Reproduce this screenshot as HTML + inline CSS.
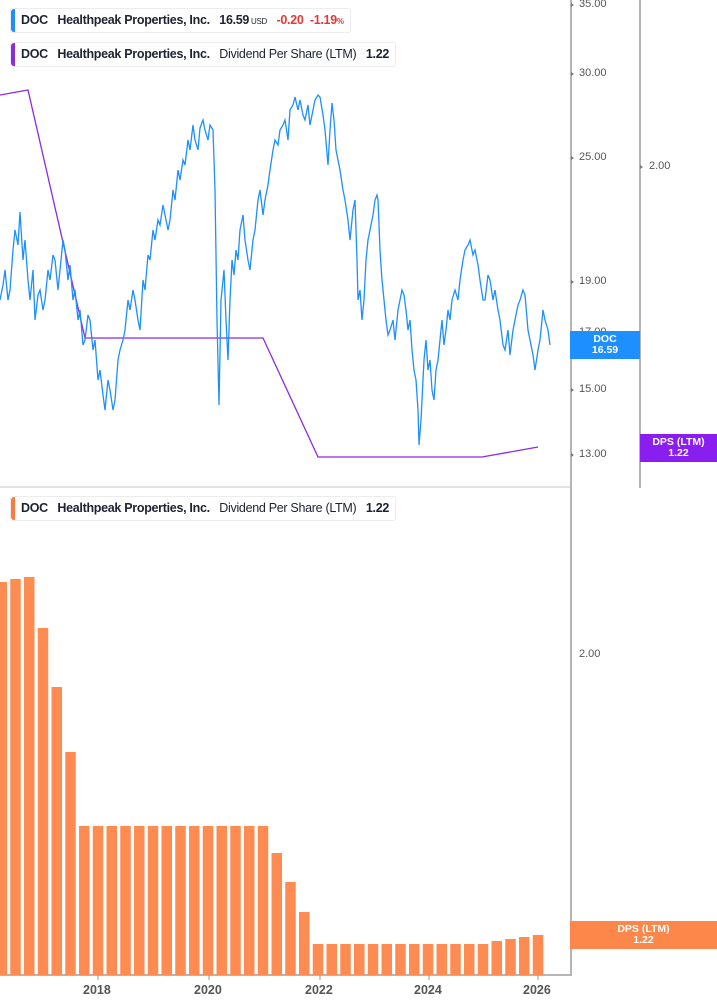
<!DOCTYPE html>
<html><head><meta charset="utf-8"><style>
body{margin:0;width:717px;height:1005px;background:#fff;overflow:hidden;position:relative;font-family:"Liberation Sans",sans-serif}
.leg{position:absolute;left:10px;height:23px;border:1px solid #ececec;border-radius:3px;background:#fff;font-size:12.5px;font-weight:bold;color:#1d2230;line-height:23px;padding:0 6px 0 10px;white-space:nowrap;letter-spacing:-0.3px}
.leg:before{content:"";position:absolute;left:0;top:0;bottom:0;width:4px;border-radius:3px 0 0 3px;background:var(--c)}
.n{font-weight:normal}
.ax{position:absolute;font-size:11px;color:#555}
.tag{position:absolute;color:#fff;font-weight:bold;font-size:10.5px;text-align:center;line-height:11px;padding-top:3px;box-sizing:border-box}
.yr{position:absolute;top:983px;font-size:12.5px;font-weight:bold;color:#555}
</style></head><body>
<svg width="717" height="1005" style="position:absolute;left:0;top:0">
<rect x="0" y="486" width="570" height="2" fill="#e4e4e4"/>
<line x1="571" y1="0" x2="571" y2="976" stroke="#b5b5b5" stroke-width="2"/>
<line x1="640" y1="0" x2="640" y2="488" stroke="#b5b5b5" stroke-width="2"/>
<line x1="0" y1="975" x2="571" y2="975" stroke="#b5b5b5" stroke-width="2"/>
<g fill="#777"><path d="M571 3l3 2-3 2z"/><path d="M571 72l3 2-3 2z"/><path d="M571 156l3 2-3 2z"/><path d="M571 280l3 2-3 2z"/><path d="M571 331l3 2-3 2z"/><path d="M571 388l3 2-3 2z"/><path d="M571 453l3 2-3 2z"/><path d="M640 165l3 2-3 2z"/></g>
<g stroke="#999" stroke-width="1"><line x1="98" y1="975" x2="98" y2="980"/><line x1="209" y1="975" x2="209" y2="980"/><line x1="320" y1="975" x2="320" y2="980"/><line x1="429" y1="975" x2="429" y2="980"/><line x1="538" y1="975" x2="538" y2="980"/></g>
<polyline fill="none" stroke="#8a2be2" stroke-width="1.3" points="0,95 28,90 85,338 263,338 318,457 482,457 538,447"/>
<polyline fill="none" stroke="#1e8fff" stroke-width="1.3" points="0,300 3,285 5,270 8,300 10,290 13,250 15,230 18,245 20,212 23,260 25,240 28,280 30,300 33,270 35,320 38,295 40,290 43,310 45,300 48,270 50,280 53,255 55,260 58,290 60,270 63,240 65,250 68,280 70,265 73,300 75,290 78,320 80,310 83,345 85,340 88,315 90,320 93,350 95,340 98,380 100,370 103,395 105,410 108,380 110,390 113,410 115,400 118,360 120,350 123,340 125,330 128,300 130,310 133,290 135,300 138,320 140,330 143,280 145,290 148,255 150,260 153,230 155,240 158,220 160,225 163,205 165,215 168,230 170,220 173,190 175,200 178,170 180,180 183,160 185,165 188,140 190,150 193,125 195,140 198,150 200,128 203,120 205,130 208,140 210,125 213,130 215,190 217,320 219,405 221,300 224,270 226,320 228,360 230,300 232,260 234,275 236,250 238,260 240,230 243,215 245,240 248,260 250,270 253,240 255,230 258,200 260,190 263,215 265,200 268,185 270,170 273,150 275,140 278,145 280,130 283,125 285,120 288,140 290,110 293,105 295,97 298,110 300,100 303,115 305,120 308,105 310,125 313,110 315,100 318,95 320,97 323,115 325,130 328,165 330,130 332,103 334,120 336,150 338,160 340,170 343,190 345,200 348,220 350,240 353,210 355,200 357,260 358,300 360,290 362,320 364,300 366,260 368,240 370,230 373,215 375,200 377,195 378,200 380,250 382,280 384,300 386,320 388,335 390,330 393,320 395,340 398,310 400,300 402,290 404,295 406,310 408,330 410,320 412,350 414,370 416,380 418,410 419,445 421,420 422,400 424,360 426,340 428,370 430,360 432,390 434,400 436,370 438,360 440,340 442,320 444,345 446,330 448,310 450,320 452,300 455,290 458,300 460,280 463,260 465,250 468,245 470,240 473,255 475,250 478,265 480,280 483,300 485,300 488,275 490,280 493,300 495,290 498,310 500,320 503,345 505,350 508,330 510,355 513,330 515,320 518,305 520,300 523,290 525,295 528,330 530,340 533,355 535,370 538,350 540,340 543,310 545,320 548,330 550,345"/>
<g fill="#fd8b52">
<rect x="-3.5" y="582" width="10.5" height="393"/>
<rect x="10.25" y="579" width="10.5" height="396"/>
<rect x="24" y="577" width="10.5" height="398"/>
<rect x="37.75" y="628" width="10.5" height="347"/>
<rect x="51.5" y="687" width="10.5" height="288"/>
<rect x="65.25" y="752" width="10.5" height="223"/>
<rect x="79" y="826" width="10.5" height="149"/>
<rect x="92.75" y="826" width="10.5" height="149"/>
<rect x="106.5" y="826" width="10.5" height="149"/>
<rect x="120.25" y="826" width="10.5" height="149"/>
<rect x="134" y="826" width="10.5" height="149"/>
<rect x="147.75" y="826" width="10.5" height="149"/>
<rect x="161.5" y="826" width="10.5" height="149"/>
<rect x="175.25" y="826" width="10.5" height="149"/>
<rect x="189" y="826" width="10.5" height="149"/>
<rect x="202.75" y="826" width="10.5" height="149"/>
<rect x="216.5" y="826" width="10.5" height="149"/>
<rect x="230.25" y="826" width="10.5" height="149"/>
<rect x="244" y="826" width="10.5" height="149"/>
<rect x="257.75" y="826" width="10.5" height="149"/>
<rect x="271.5" y="853" width="10.5" height="122"/>
<rect x="285.25" y="882" width="10.5" height="93"/>
<rect x="299" y="912" width="10.5" height="63"/>
<rect x="312.75" y="944" width="10.5" height="31"/>
<rect x="326.5" y="944" width="10.5" height="31"/>
<rect x="340.25" y="944" width="10.5" height="31"/>
<rect x="354" y="944" width="10.5" height="31"/>
<rect x="367.75" y="944" width="10.5" height="31"/>
<rect x="381.5" y="944" width="10.5" height="31"/>
<rect x="395.25" y="944" width="10.5" height="31"/>
<rect x="409" y="944" width="10.5" height="31"/>
<rect x="422.75" y="944" width="10.5" height="31"/>
<rect x="436.5" y="944" width="10.5" height="31"/>
<rect x="450.25" y="944" width="10.5" height="31"/>
<rect x="464" y="944" width="10.5" height="31"/>
<rect x="477.75" y="944" width="10.5" height="31"/>
<rect x="491.5" y="941" width="10.5" height="34"/>
<rect x="505.25" y="939" width="10.5" height="36"/>
<rect x="519" y="937" width="10.5" height="38"/>
<rect x="532.75" y="935" width="10.5" height="40"/>
</g>
</svg>
<div class="leg" style="--c:#1e8fff;top:8px">DOC&nbsp;&nbsp; Healthpeak Properties, Inc.&nbsp;&nbsp; 16.59<span style="font-size:8px;font-weight:normal"> USD</span>&nbsp;&nbsp; <span style="color:#e53935">-0.20&nbsp; -1.19<span style="font-size:8px">%</span></span></div>
<div class="leg" style="--c:#8a2be2;top:42px">DOC&nbsp;&nbsp; Healthpeak Properties, Inc.&nbsp;&nbsp; <span class="n">Dividend Per Share (LTM)</span>&nbsp;&nbsp; 1.22</div>
<div class="leg" style="--c:#fd7a3d;top:496px">DOC&nbsp;&nbsp; Healthpeak Properties, Inc.&nbsp;&nbsp; <span class="n">Dividend Per Share (LTM)</span>&nbsp;&nbsp; 1.22</div>
<div class="ax" style="left:579px;top:-2px">35.00</div>
<div class="ax" style="left:579px;top:67px">30.00</div>
<div class="ax" style="left:579px;top:151px">25.00</div>
<div class="ax" style="left:579px;top:275px">19.00</div>
<div class="ax" style="left:579px;top:326px">17.00</div>
<div class="ax" style="left:579px;top:383px">15.00</div>
<div class="ax" style="left:579px;top:448px">13.00</div>
<div class="ax" style="left:649px;top:160px">2.00</div>
<div class="ax" style="left:579px;top:648px">2.00</div>
<div class="tag" style="left:570px;top:331px;width:70px;height:28px;background:#1e8fff">DOC<br>16.59</div>
<div class="tag" style="left:640px;top:434px;width:77px;height:28px;background:#8a1ef0">DPS (LTM)<br>1.22</div>
<div class="tag" style="left:570px;top:921px;width:147px;height:28px;background:#fd874a">DPS (LTM)<br>1.22</div>
<div class="yr" style="left:83px">2018</div>
<div class="yr" style="left:194px">2020</div>
<div class="yr" style="left:305px">2022</div>
<div class="yr" style="left:414px">2024</div>
<div class="yr" style="left:523px">2026</div>
</body></html>
